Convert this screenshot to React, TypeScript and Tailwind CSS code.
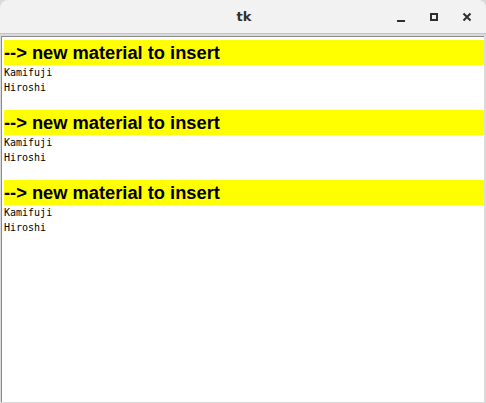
const blocks = [0, 1, 2]

export default function App() {
  return (
    <div className="w-[486px] h-[403px] bg-[#dadada] flex flex-col overflow-hidden">
      {/* title bar */}
      <div className="h-[34px] bg-[#f2f2f2] rounded-t-[8px] relative flex items-center justify-center border-b border-[#c4c4c4]">
        <span className="text-[13px] font-bold text-[#303030] ml-[2px] font-['DejaVu_Sans']">tk</span>
        <div className="absolute right-0 top-0 h-full flex items-center">
          <div className="w-[33px] flex justify-center pt-[8px]">
            <div className="w-[8px] h-[2px] bg-[#2e2e2e]" />
          </div>
          <div className="w-[33px] flex justify-center">
            <div className="w-[8px] h-[8px] border-2 border-[#2e2e2e]" />
          </div>
          <div className="w-[34px] flex justify-center">
            <svg width="10" height="10" viewBox="0 0 10 10">
              <path d="M1.5 1.5 L8.5 8.5 M8.5 1.5 L1.5 8.5" stroke="#2e2e2e" strokeWidth="2" />
            </svg>
          </div>
          <div className="w-[2px]" />
        </div>
      </div>
      {/* text widget */}
      <div className="flex-1 ml-[1px] mr-[2px] mt-[2px] mb-[1px] border-l border-t border-[#8a8a8a] bg-white pl-[2px] pt-[3px]">
        {blocks.map((b) => (
          <div key={b}>
            <div className="h-[25px] bg-[#ffff00] text-[18.3px] font-bold text-black leading-[25px] whitespace-nowrap font-['Liberation_Sans']">
              --&gt; new material to insert
            </div>
            <div className="text-[10px] leading-[15px] text-black font-['DejaVu_Sans_Mono']">
              <div>Kamifuji</div>
              <div>Hiroshi</div>
              <div>&nbsp;</div>
            </div>
          </div>
        ))}
      </div>
    </div>
  )
}
